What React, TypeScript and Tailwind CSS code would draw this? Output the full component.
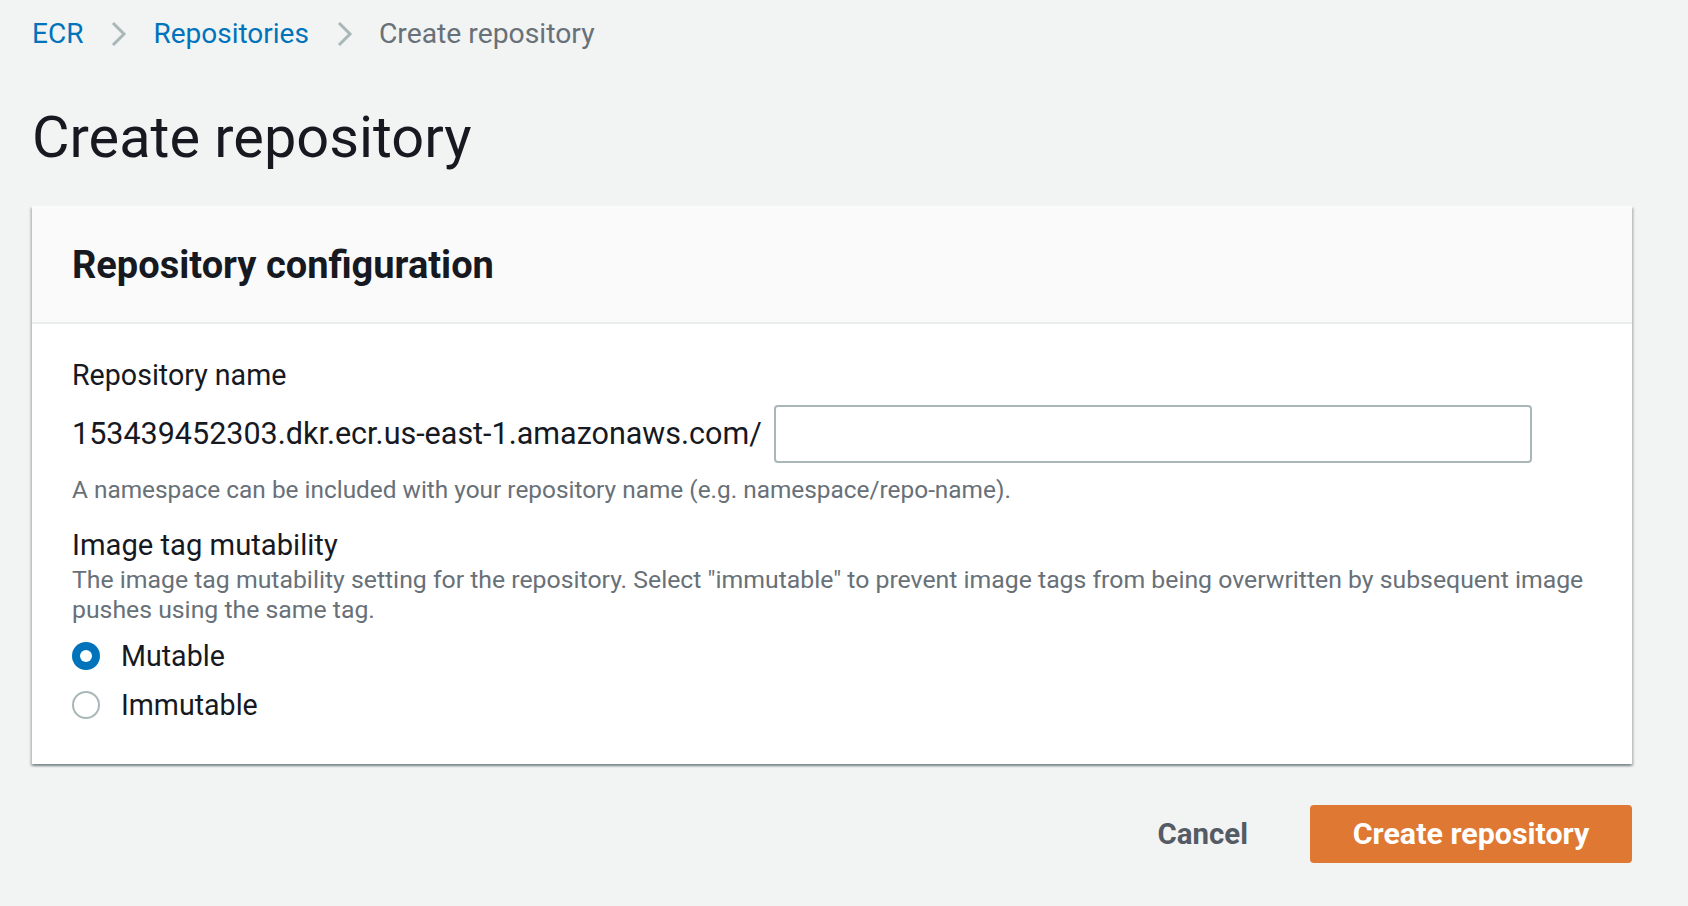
import React, { useState } from 'react';

const Chevron = () => (
  <svg width="18" height="26" viewBox="0 0 18 26" className="shrink-0">
    <polyline points="4,2 15,13 4,24" fill="none" stroke="#aab7b8" strokeWidth="3" />
  </svg>
);

interface RadioProps {
  label: string;
  checked: boolean;
  onSelect: () => void;
}

const Radio: React.FC<RadioProps> = ({ label, checked, onSelect }) => (
  <button type="button" onClick={onSelect} className="flex items-center h-[36px] text-left">
    {checked ? (
      <span className="w-[28px] h-[28px] rounded-full bg-[#0073bb] flex items-center justify-center shrink-0">
        <span className="w-[12px] h-[12px] rounded-full bg-white" />
      </span>
    ) : (
      <span className="w-[28px] h-[28px] rounded-full border-2 border-[#aab7b8] bg-white shrink-0" />
    )}
    <span className="ml-[21px] text-[28.6px] leading-[36px] text-[#16191f]">{label}</span>
  </button>
);

export default function App() {
  const [mutability, setMutability] = useState<'mutable' | 'immutable'>('mutable');
  const [name, setName] = useState('');

  return (
    <div
      className="min-h-screen bg-[#f2f3f3] pl-[32px] pr-[56px] pt-[16px]"
      style={{ fontFamily: 'Roboto, "Liberation Sans", sans-serif' }}
    >
      {/* Breadcrumbs */}
      <nav className="flex items-center gap-[26px] text-[28px] leading-[36px]">
        <a className="text-[#0073bb]">ECR</a>
        <Chevron />
        <a className="text-[#0073bb]">Repositories</a>
        <Chevron />
        <span className="text-[#687078] text-[28.3px]">Create repository</span>
      </nav>

      <h1 className="mt-[53px] text-[57.7px] leading-[64px] text-[#16191f]">Create repository</h1>

      {/* Card */}
      <div className="mt-[37px] bg-white shadow-[0_2px_2px_0_rgba(0,28,36,0.3),2px_2px_2px_0_rgba(0,28,36,0.15),-2px_2px_2px_0_rgba(0,28,36,0.15)]">
        <div className="bg-[#fafafa] border-b-2 border-[#eaeded] h-[118px] flex items-center px-[40px]">
          <h2 className="mt-[2px] text-[38px] font-bold leading-[44px] text-[#16191f]">Repository configuration</h2>
        </div>
        <div className="px-[40px] pt-[33px] pb-[41px]">
          <div className="text-[28.6px] leading-[36px] text-[#16191f]">Repository name</div>
          <div className="mt-[12px] flex items-center gap-[12px]">
            <span className="text-[30.5px] leading-[40px] text-[#16191f]">
              153439452303.dkr.ecr.us-east-1.amazonaws.com/
            </span>
            <input
              value={name}
              onChange={(e) => setName(e.target.value)}
              className="w-[758px] h-[58px] border-2 border-[#aab7b8] rounded-[4px] bg-white px-[16px] text-[28px] outline-none"
            />
          </div>
          <p className="mt-[11px] text-[24.4px] leading-[32px] text-[#687078]">
            A namespace can be included with your repository name (e.g. namespace/repo-name).
          </p>

          <div className="mt-[21px] text-[29.2px] leading-[36px] text-[#16191f]">Image tag mutability</div>
          <p className="mt-[2px] text-[24.8px] leading-[30px] text-[#687078]">
            The image tag mutability setting for the repository. Select "immutable" to prevent image tags from being
            overwritten by subsequent image pushes using the same tag.
          </p>
          <div className="mt-[13px] flex flex-col gap-[13px]">
            <Radio label="Mutable" checked={mutability === 'mutable'} onSelect={() => setMutability('mutable')} />
            <Radio label="Immutable" checked={mutability === 'immutable'} onSelect={() => setMutability('immutable')} />
          </div>
        </div>
      </div>

      {/* Actions */}
      <div className="mt-[41px] flex items-center justify-end gap-[62px]">
        <button type="button" className="text-[29.4px] font-bold text-[#545b64]">Cancel</button>
        <button
          type="button"
          className="h-[58px] w-[322px] rounded-[4px] bg-[#df7832] text-white text-[30.4px] font-bold"
        >
          Create repository
        </button>
      </div>
    </div>
  );
}
